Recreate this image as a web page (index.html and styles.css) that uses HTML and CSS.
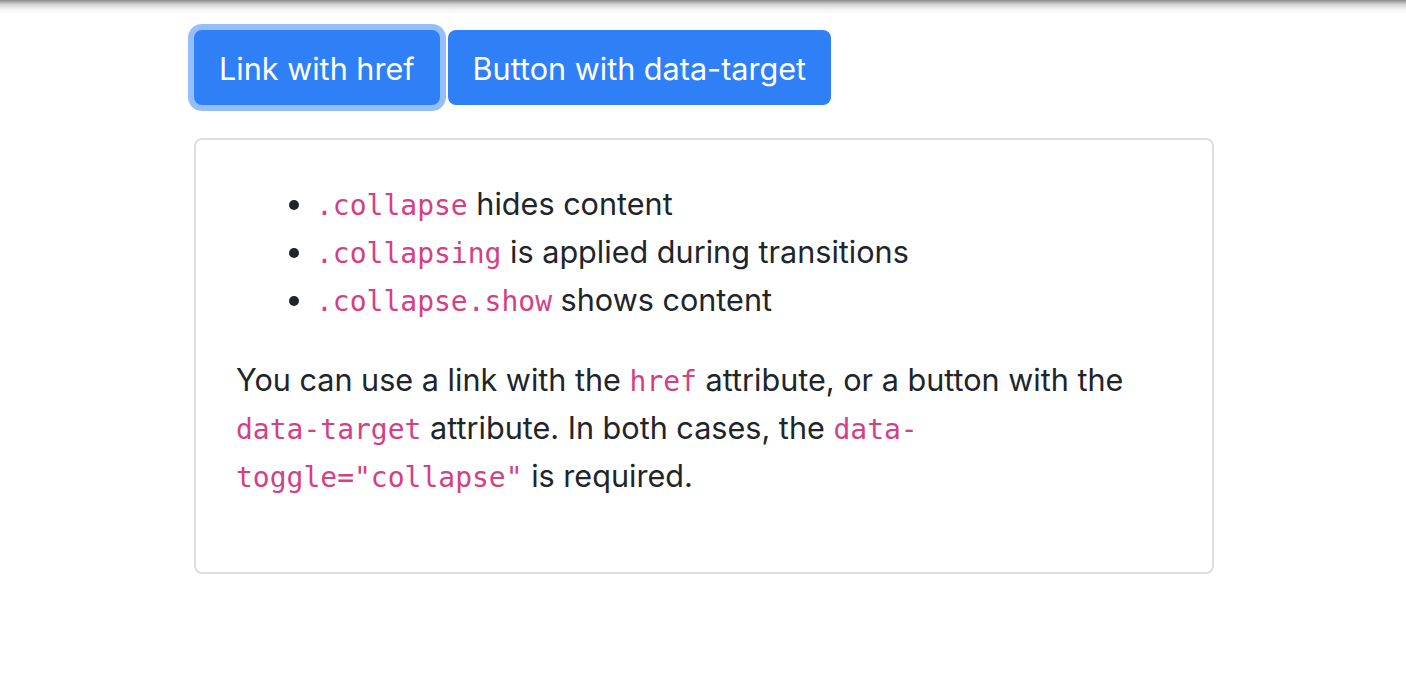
FILE: index.html
```html
<!DOCTYPE html>
<html lang="en">
<head>
<meta charset="utf-8">
<title>Collapse</title>
<link rel="stylesheet" href="styles.css">
</head>
<body>
<div class="top-shadow"></div>
<div class="container">
  <p class="actions"><a class="btn btn-primary focused" href="#collapseExample" role="button">Link with href</a> <button class="btn btn-primary" type="button">Button with data-target</button></p>
  <div class="card">
    <div class="card-body">
      <ul>
        <li><code>.collapse</code> hides content</li>
        <li><code>.collapsing</code> is applied during transitions</li>
        <li><code>.collapse.show</code> shows content</li>
      </ul>
      <p>You can use a link with the <code>href</code> attribute, or a button with the <code>data-target</code> attribute. In both cases, the <code>data-<wbr>toggle="collapse"</code> is required.</p>
    </div>
  </div>
</div>
</body>
</html>
```

FILE: styles.css
```css
* { box-sizing: border-box; }
html, body { margin: 0; padding: 0; }
body {
  font-family: Inter, "Liberation Sans", Arial, sans-serif;
  font-size: 30.6px;
  line-height: 48px;
  color: #212529;
  background: #fff;
}
.top-shadow {
  position: fixed;
  left: 0; top: 0; right: 0;
  height: 14px;
  background: linear-gradient(to bottom, rgba(0,0,0,0.45), rgba(0,0,0,0.18) 30%, rgba(0,0,0,0.05) 65%, rgba(0,0,0,0));
  pointer-events: none;
}
.container {
  width: 1020px;
  margin: 0 auto 0 194px;
  padding-top: 30px;
}
p { margin: 0 0 32px 0; }
.actions { margin-bottom: 33px; line-height: 0; display: flex; gap: 8px; }
.btn {
  display: inline-block;
  font-family: inherit;
  font-size: 30.6px;
  line-height: 48px;
  padding: 13px 23px 11px;
  border: 2px solid #2f80f7;
  border-radius: 8px;
  background: #2f80f7;
  color: #fff;
  text-decoration: none;
  cursor: pointer;
  margin: 0;
  height: 75px;
}
.focused { box-shadow: 0 0 0 6px #94bffb; }
.card {
  border: 2px solid #dfdfdf;
  border-radius: 8px;
}
.card-body { padding: 40px; }
ul { margin: 0 0 32px 0; padding-left: 80px; }
li { line-height: 48px; }
code {
  font-family: "DejaVu Sans Mono", "Liberation Mono", monospace;
  font-size: 28px;
  line-height: 1;
  color: #d63f84;
}
```
